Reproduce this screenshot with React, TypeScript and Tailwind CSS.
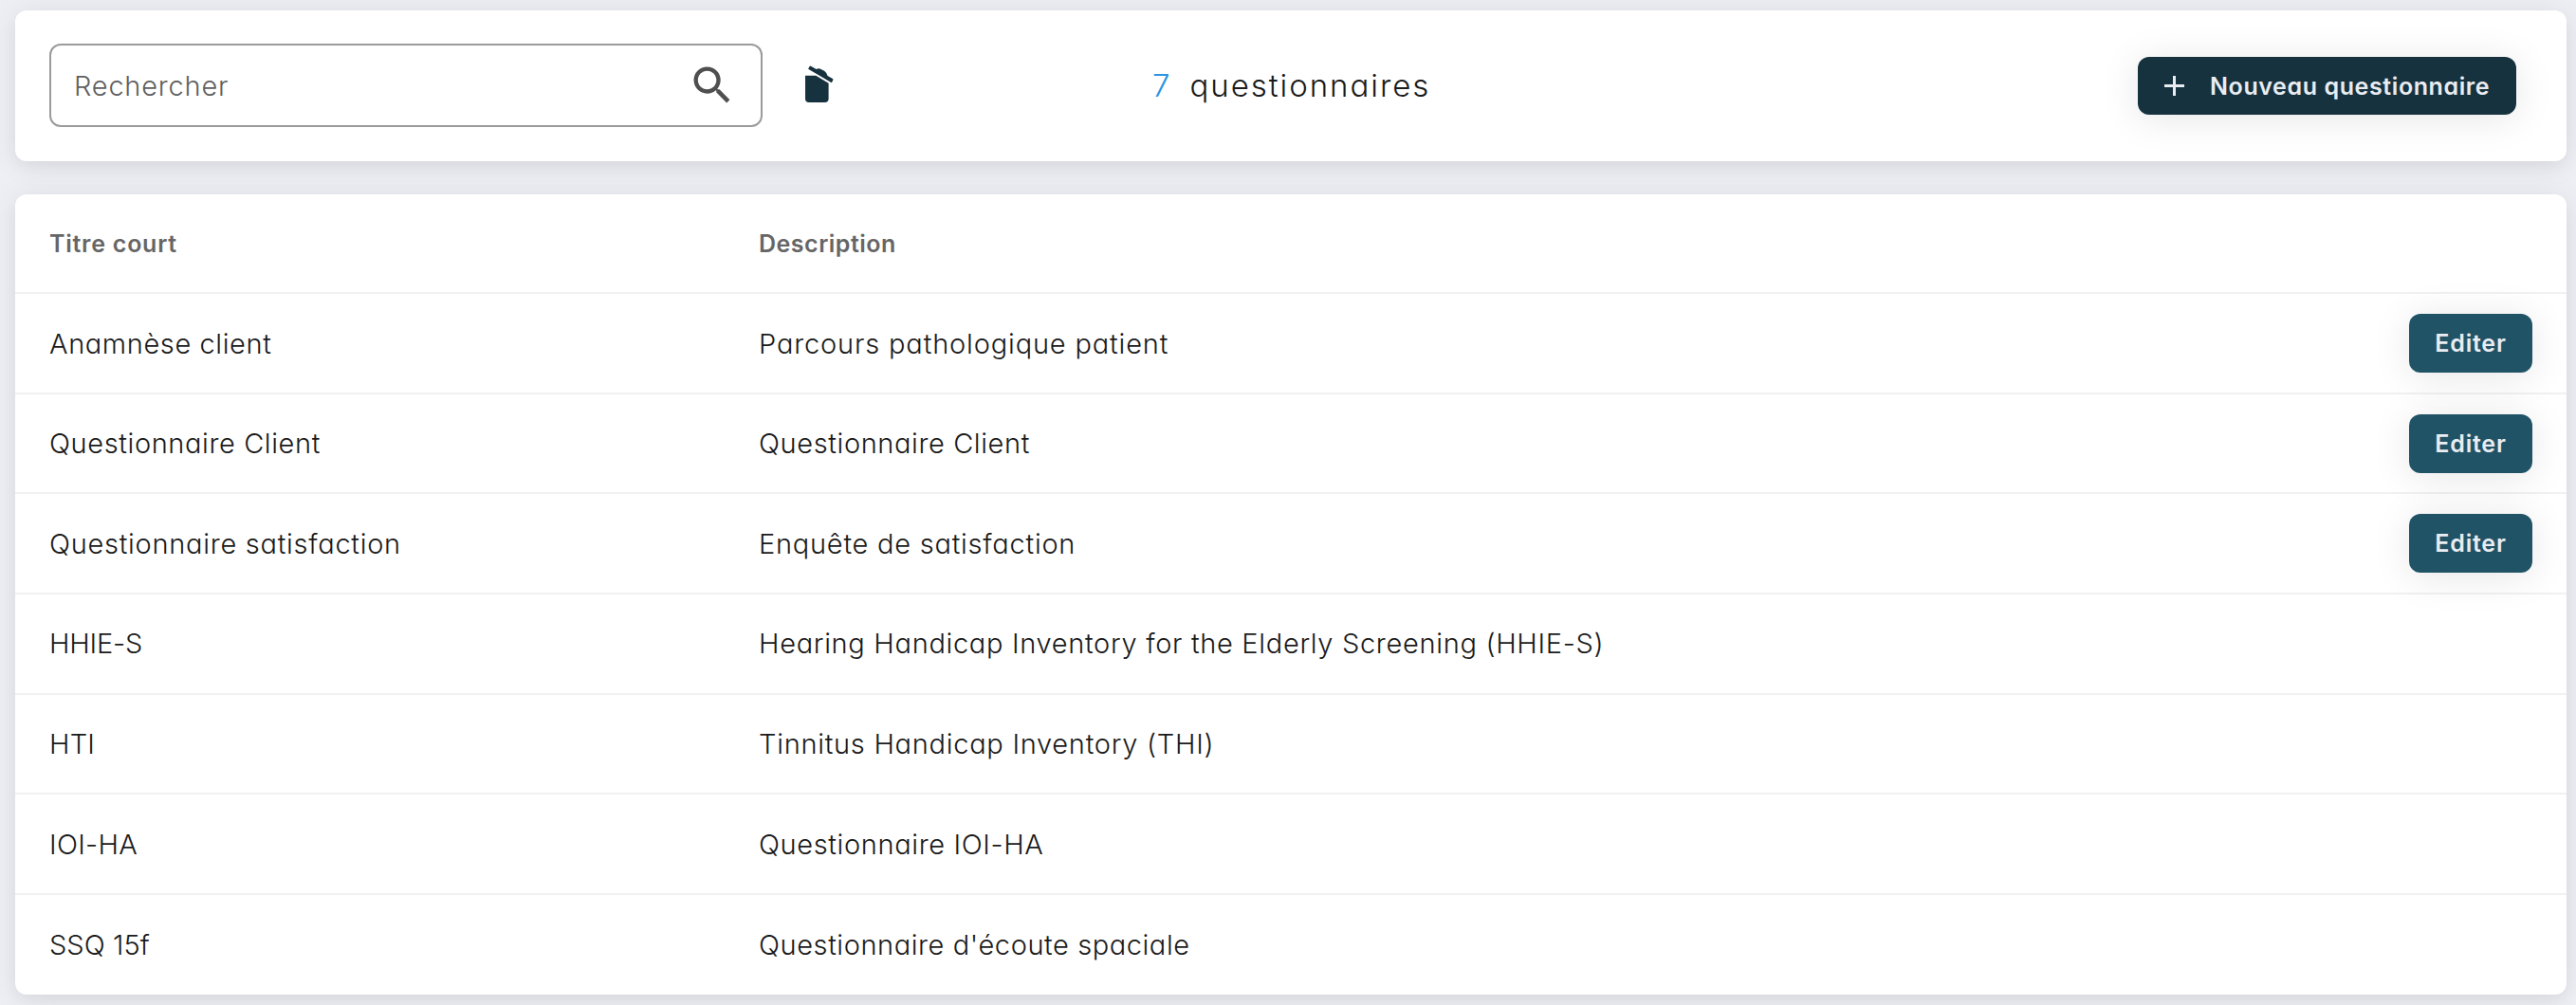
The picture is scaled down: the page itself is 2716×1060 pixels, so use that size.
import type { ReactNode } from 'react';

type Row = {
  title: string;
  titleTracking: string;
  description: string;
  descriptionTracking: string;
  editable?: boolean;
};

const rows: Row[] = [
  { title: 'Anamnèse client', titleTracking: 'tracking-[0.6px]', description: 'Parcours pathologique patient', descriptionTracking: 'tracking-[0.84px]', editable: true },
  { title: 'Questionnaire Client', titleTracking: 'tracking-[0.6px]', description: 'Questionnaire Client', descriptionTracking: 'tracking-[0.6px]', editable: true },
  { title: 'Questionnaire satisfaction', titleTracking: 'tracking-[0.72px]', description: 'Enquête de satisfaction', descriptionTracking: 'tracking-[0.75px]', editable: true },
  { title: 'HHIE-S', titleTracking: 'tracking-[-0.2px]', description: 'Hearing Handicap Inventory for the Elderly Screening (HHIE-S)', descriptionTracking: 'tracking-[0.68px]' },
  { title: 'HTI', titleTracking: 'tracking-[0.2px]', description: 'Tinnitus Handicap Inventory (THI)', descriptionTracking: 'tracking-[0.72px]' },
  { title: 'IOI-HA', titleTracking: 'tracking-[0.3px]', description: 'Questionnaire IOI-HA', descriptionTracking: 'tracking-[0.62px]' },
  { title: 'SSQ 15f', titleTracking: 'tracking-[0.05px]', description: "Questionnaire d'écoute spaciale", descriptionTracking: 'tracking-[0.57px]' },
];

function Card({ className, children }: { className: string; children: ReactNode }) {
  return (
    <section
      className={`rounded-xl bg-white shadow-[0_8px_16px_rgba(0,0,0,0.04),0_2px_32px_rgba(0,0,0,0.08)] ${className}`}
    >
      {children}
    </section>
  );
}

function TrashIcon() {
  return (
    <svg className="mb-px ml-[40px] h-[48px] w-[40px] shrink-0 text-[#16323f]" viewBox="0 0 40 48" fill="currentColor">
      <path d="M5 13.7H16.3L29.6 21.8V38a4 4 0 0 1-4 4H9a4 4 0 0 1-4-4Z" />
      <path d="M8.1 6.8 9.6 4Q10.1 3.3 10.9 3.8L16.7 7.1Q18.7 5.6 21.6 6.9L25.4 9.1Q27.6 10.8 28.6 14L33.9 17.1Q34.7 17.7 34.3 18.4L32.8 21.2Z" />
    </svg>
  );
}

function SearchIcon() {
  return (
    <svg className="h-[52px] w-[52px] text-[#4f4f4f]" viewBox="0 0 24 24" fill="currentColor">
      <path d="M15.5 14h-.79l-.28-.27A6.471 6.471 0 0 0 16 9.5 6.5 6.5 0 1 0 9.5 16c1.61 0 3.09-.59 4.23-1.57l.27.28v.79l5 4.99L20.49 19l-4.99-5zm-6 0C7.01 14 5 11.99 5 9.5S7.01 5 9.5 5 14 7.01 14 9.5 11.99 14 9.5 14z" />
    </svg>
  );
}

export default function App() {
  return (
    <main className="flex h-[1060px] w-[2716px] flex-col gap-[35px] overflow-hidden bg-[#eeeff4] pt-[11px] pr-[10px] pl-[16px] font-['Inter',sans-serif] text-[29px] leading-none font-light whitespace-nowrap text-[#1a1a1a] [font-feature-settings:'cv11']">
      <Card className="flex h-[159px] shrink-0 items-center pr-[53px] pl-[36px]">
        <div className="mb-px flex h-[88px] w-[752px] items-center justify-between rounded-xl border-2 border-[#9b9b9b] pr-[25px] pl-[24px]">
          <span className="tracking-[0.78px] text-[#5f5f5f]">Rechercher</span>
          <SearchIcon />
        </div>
        <TrashIcon />
        <p className="ml-[331px] flex gap-[21px] text-[33px]">
          <span className="text-[#2b93e0]">7</span>
          <span className="tracking-[1.95px]">questionnaires</span>
        </p>
        <button className="ml-auto flex h-[61px] w-[399px] items-center rounded-xl bg-[#16323f] pl-[28px] text-[25px] font-semibold text-[#e9ecf1] shadow-[0_4px_40px_rgba(0,0,0,0.10)]">
          <svg className="h-[21px] w-[21px]" viewBox="0 0 21 21" stroke="currentColor" strokeWidth="3">
            <path d="M10.5 0V21M0 10.5H21" />
          </svg>
          <span className="ml-[27px] pt-px tracking-[0.6px]">Nouveau questionnaire</span>
        </button>
      </Card>

      <Card className="h-[844px] shrink-0">
        <div className="grid h-[105.3px] grid-cols-[748px_1fr] items-center border-b-2 border-[#f1f1f1] px-[36px] pt-[2px] text-[25px] font-semibold text-[#666666]">
          <span className="tracking-[0.75px]">Titre court</span>
          <span className="tracking-[0.5px]">Description</span>
        </div>
        {rows.map((row) => (
          <div
            key={row.title}
            className="grid h-[105.6px] grid-cols-[748px_1fr_130px] items-center border-b-2 border-[#f1f1f1] px-[36px] last:h-[105px] last:border-b-0"
          >
            <span className={row.titleTracking}>{row.title}</span>
            <span className={row.descriptionTracking}>{row.description}</span>
            {row.editable && (
              <button className="flex h-[62px] items-center justify-center rounded-xl bg-[#205366] pt-px text-[25px] font-semibold tracking-[0.8px] text-[#e9ecf1] shadow-[0_4px_40px_rgba(0,0,0,0.10)]">
                Editer
              </button>
            )}
          </div>
        ))}
      </Card>
    </main>
  );
}
